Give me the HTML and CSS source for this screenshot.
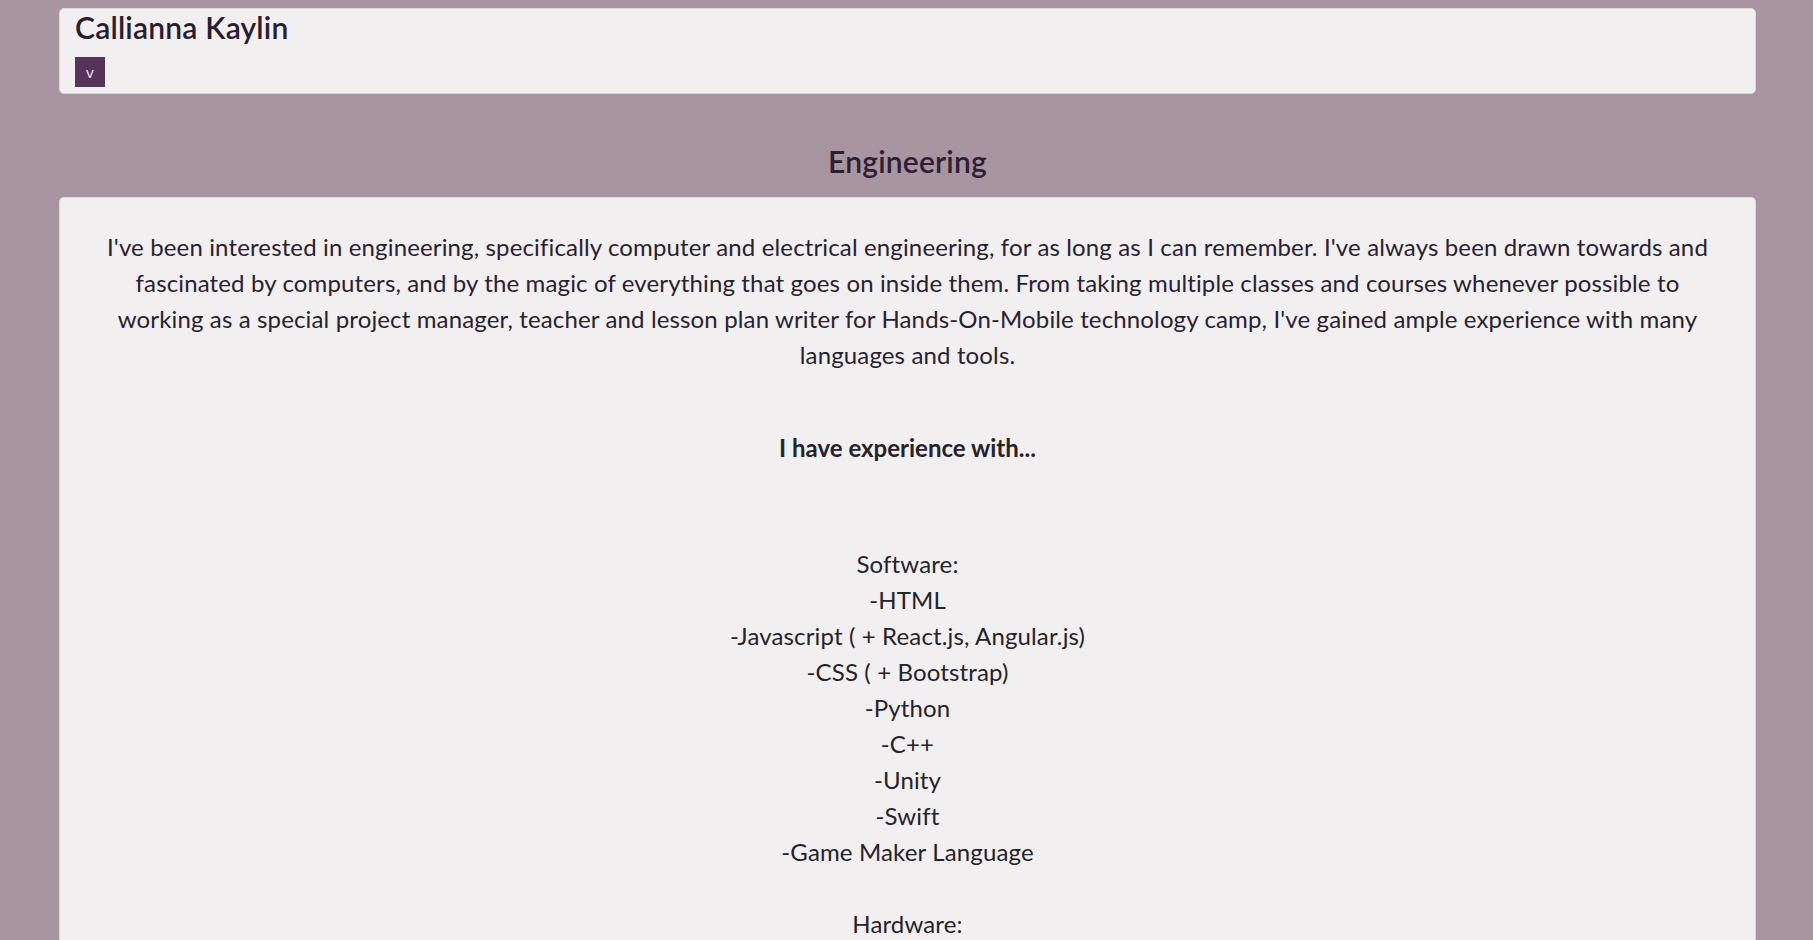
FILE: index.html
```html
<!DOCTYPE html>
<html lang="en">
<head>
<meta charset="utf-8">
<title>Callianna Kaylin - Engineering</title>
<link rel="stylesheet" href="styles.css">
</head>
<body>
<div class="page">
  <header class="top-card">
    <h1 class="name">Callianna Kaylin</h1>
    <button class="toggle" type="button">v</button>
  </header>

  <h2 class="section-title">Engineering</h2>

  <section class="content-card">
    <p class="intro">I've been interested in engineering, specifically computer and electrical engineering, for as long as I can remember. I've always been drawn towards and fascinated by computers, and by the magic of everything that goes on inside them. From taking multiple classes and courses whenever possible to working as a special project manager, teacher and lesson plan writer for Hands-On-Mobile technology camp, I've gained ample experience with many languages and tools.</p>

    <h3 class="exp-title">I have experience with...</h3>

    <p class="list">Software:<br>-HTML<br>-Javascript ( + React.js, Angular.js)<br>-CSS ( + Bootstrap)<br>-Python<br>-C++<br>-Unity<br>-Swift<br>-Game Maker Language<br><br>Hardware:</p>
  </section>
</div>
</body>
</html>
```

FILE: styles.css
```css
html, body {
  margin: 0;
  padding: 0;
}

body {
  background: #a8959f;
  font-family: "Lato", "Open Sans", sans-serif;
  color: #2a2130;
}

.page {
  padding: 8px 57px 0 59px;
}

.top-card {
  background: #f1eff0;
  border: 1px solid #ddd8db;
  border-radius: 5px;
  padding: 0 16px 6px 15px;
  display: flex;
  flex-direction: column;
  align-items: flex-start;
}

.name {
  margin: 0;
  font-size: 30px;
  font-weight: 600;
  line-height: 36px;
  color: #2b1d30;
  letter-spacing: 0.2px;
}

.toggle {
  margin-top: 12px;
  width: 30px;
  height: 30px;
  border: 0;
  border-radius: 0;
  padding: 0;
  background: #55335a;
  color: #e6dde8;
  font-family: "Lato", sans-serif;
  font-size: 16px;
  line-height: 30px;
  text-align: center;
}

.section-title {
  margin: 0;
  padding: 49px 0 18px;
  text-align: center;
  font-size: 30px;
  font-weight: 600;
  line-height: 36px;
  color: #2e1f35;
  letter-spacing: 0.2px;
}

.content-card {
  background: #f1eff0;
  border: 1px solid #ddd8db;
  border-bottom: 0;
  border-radius: 5px 5px 0 0;
  padding: 31px 40px 60px;
  text-align: center;
}

.intro {
  margin: 0;
  font-size: 24px;
  line-height: 36px;
  letter-spacing: 0.14px;
  color: #2a2130;
}

.exp-title {
  margin: 57px 0 0;
  font-size: 24px;
  font-weight: 700;
  line-height: 36px;
  color: #26222a;
}

.list {
  margin: 80px 0 0;
  font-size: 24px;
  line-height: 36px;
  letter-spacing: 0.14px;
  color: #26222a;
}
```
